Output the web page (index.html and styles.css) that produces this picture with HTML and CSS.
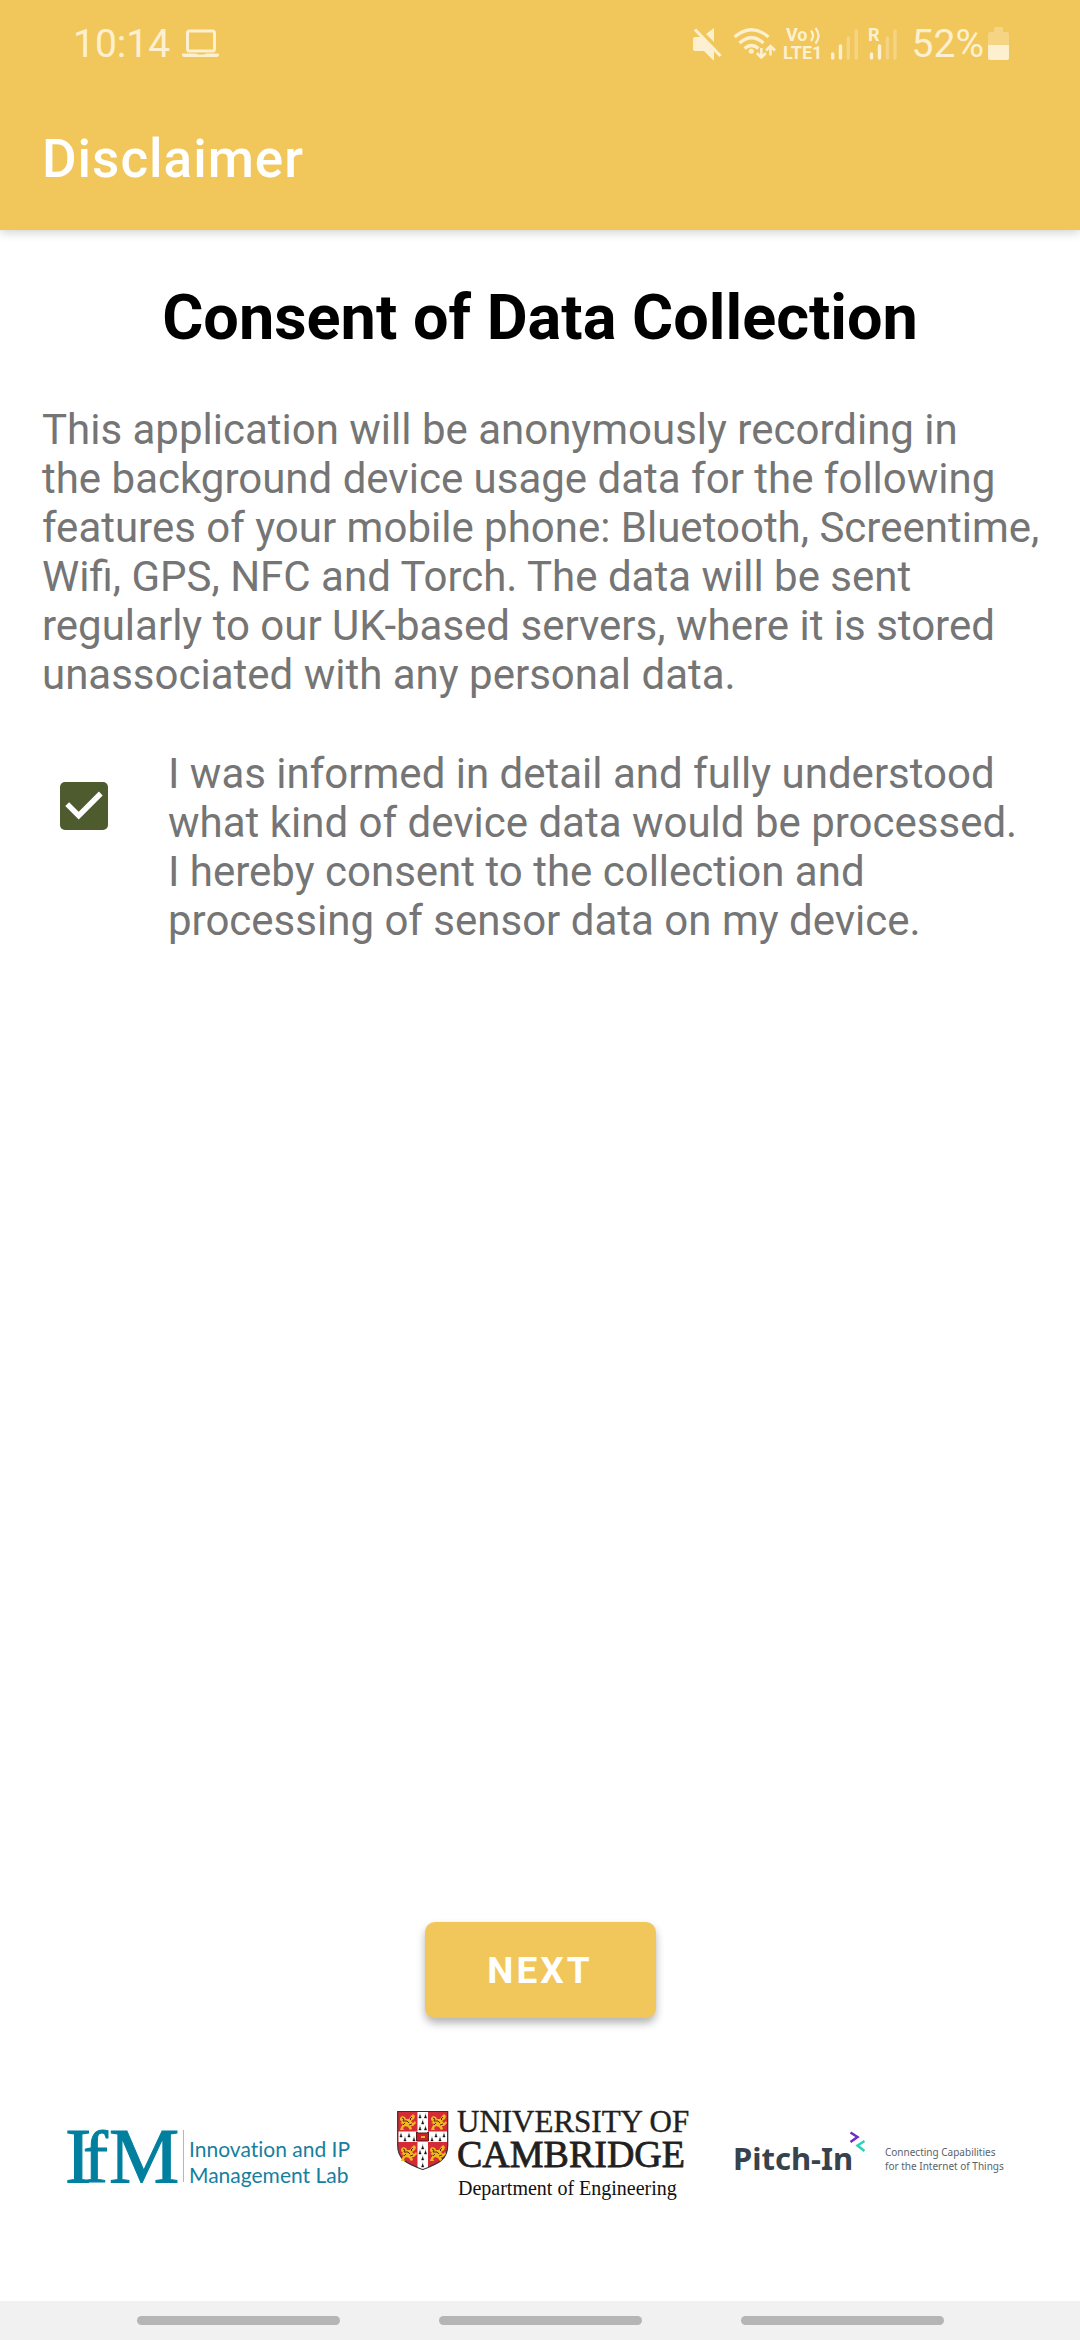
FILE: index.html
```html
<!DOCTYPE html>
<html lang="en">
<head>
<meta charset="utf-8">
<meta name="viewport" content="width=device-width">
<title>Disclaimer</title>
<link rel="stylesheet" href="styles.css">
</head>
<body>
<header class="top">
  <div class="status">
    <span class="clock">10:14</span>
    <svg class="laptop" width="38" height="30" viewBox="0 0 38 30" fill="none" stroke="currentColor"><rect x="5.5" y="2" width="27" height="20" rx="2" stroke-width="3"/><path d="M0 24.5h14l2 1h6l2-1h13v1q0 2.500-2.500 2.500h-32q-2.500 0-2.500-2.500z" fill="currentColor" stroke="none"/></svg>
    <div class="indicators">
      <svg width="204" height="56" viewBox="690 15 204 56" fill="currentColor">
        <path d="M692 38q0-2 2-2h6l13 13v10h-1l-9-9h-9q-2 0-2-2zM705 33l8-6v14z"/>
        <path d="M694 28.500L719.500 55" stroke="currentColor" stroke-width="3.200" fill="none"/>
        <g fill="none" stroke="currentColor" stroke-width="3.200">
          <path d="M733.500 36q17-14.500 34 0M738.500 42q12-10.500 24 0M743.500 47.500q7-6 14 0"/>
          <path d="M760.300 47v9M755.800 52l4.500 4.500 4.500-4.500M769.500 54.500v-9M765 49.500l4.500-4.500 4.500 4.500" stroke-width="2.600"/>
          <path d="M810 29.500q4 5 0 10.500M814.500 27q6 7.500 0 15.500" stroke-width="2.200"/>
        </g>
        <circle cx="750.300" cy="50.300" r="2.500"/>
        <text class="badge" x="785" y="40">Vo</text>
        <text class="badge" x="782" y="58">LTE1</text>
        <g stroke="currentColor" stroke-width="3.400" stroke-linecap="round">
          <path d="M831.700 53v4M839.500 45v12M870.500 53v4M878.500 45v12"/>
          <path d="M847.300 37v20M855.200 30v27M886.500 37v20M894 30v27" opacity=".35"/>
        </g>
        <text class="badge" x="867" y="40">R</text>
      </svg>
      <span class="percent">52%</span>
      <svg width="21" height="35" viewBox="0 0 21 35" fill="currentColor"><path d="M2 5h4V1q0-1 1-1h7q1 0 1 1v4h4q2 0 2 2v11H0V7q0-2 2-2z" opacity=".35"/><path d="M0 18h21v13q0 2-2 2H2q-2 0-2-2z"/></svg>
    </div>
  </div>
  <h1 class="app-title">Disclaimer</h1>
</header>

<main class="content">
  <h2 class="heading">Consent of Data Collection</h2>
  <p class="copy">This application will be anonymously recording in<br>the background device usage data for the following<br>features of your mobile phone: Bluetooth, Screentime,<br>Wifi, GPS, NFC and Torch. The data will be sent<br>regularly to our UK-based servers, where it is stored<br>unassociated with any personal data.</p>
  <div class="consent">
    <input class="tick" type="checkbox" id="consent" checked>
    <label class="copy" for="consent">I was informed in detail and fully understood<br>what kind of device data would be processed.<br>I hereby consent to the collection and<br>processing of sensor data on my device.</label>
  </div>
  <button class="next" type="button">NEXT</button>
</main>

<footer class="logos">
  <svg width="284" height="90" viewBox="66 2110 284 90" role="img" aria-label="IfM Innovation and IP Management Lab">
    <text class="ifm-mark" x="65 83 109" y="2182">I<tspan class="ifm-f">f</tspan>M</text>
    <path d="M183.500 2130v52" stroke="#8cc5d3" stroke-width="1"/>
    <text class="ifm-name" x="189" y="2157">Innovation and IP</text>
    <text class="ifm-name" x="189" y="2183">Management Lab</text>
  </svg>
  <svg width="291" height="90" viewBox="396 2110 291 90" role="img" aria-label="University of Cambridge Department of Engineering">
    <defs>
      <g id="lion">
        <path d="M1 4l2-2 3 1 1 2h3l2-3 2-2 2 2-1 3-3 2 2 2 2-2 1 2-3 3-2 0 1 3-2 1-2-3-3-1-2 2 1 2H1l1-3 2-3-3-1 2-1-2-2z" fill="#f0b81f"/>
        <path d="M3 4l2 1-1 2 4 0 2 2M13 3l-2 2 1 1M4 11l2-2M10 11l3-1" fill="none" stroke="#5e2415" stroke-width="1"/>
      </g>
      <g id="ermine"><path d="M0-2.500v2M-1.200 2L0-1l1.200 3L0 2z" fill="#111" stroke="#111" stroke-width=".4"/></g>
    </defs>
    <path d="M396.700 2111.500h50v34c0 14-9 18-25 24-16-6-25-10-25-24z" fill="#d52b37" stroke="#333" stroke-width="1.200"/>
    <path d="M416.500 2112h10.500v19.500h19v10.500h-19v25l-5.300 2-5.200-2V2142h-19v-10.500h19z" fill="#fff"/>
    <use href="#lion" x="398" y="2114"/><use href="#lion" x="429" y="2114"/>
    <use href="#lion" x="399" y="2145"/><use href="#lion" x="428" y="2145"/>
    <use href="#ermine" x="419" y="2116"/><use href="#ermine" x="424.500" y="2116"/><use href="#ermine" x="421.700" y="2122"/><use href="#ermine" x="419" y="2128"/><use href="#ermine" x="424.500" y="2128"/>
    <use href="#ermine" x="400" y="2135"/><use href="#ermine" x="404" y="2139"/><use href="#ermine" x="408" y="2135"/><use href="#ermine" x="413" y="2139"/>
    <use href="#ermine" x="431" y="2139"/><use href="#ermine" x="435" y="2135"/><use href="#ermine" x="439" y="2139"/><use href="#ermine" x="443" y="2135"/>
    <use href="#ermine" x="421.700" y="2147"/><use href="#ermine" x="419" y="2152"/><use href="#ermine" x="424.500" y="2152"/><use href="#ermine" x="421.700" y="2158"/><use href="#ermine" x="421.700" y="2165"/>
    <path d="M415.500 2132l2 1h8l2-1v9h-12z" fill="#c9202d" stroke="#5e1a1a"/><path d="M420 2136h4v2h-4z" fill="#f0b81f"/>
    <text class="cam-top" x="456" y="2132">UNIVERSITY OF</text>
    <text class="cam-name" x="456" y="2167">CAMBRIDGE</text>
    <text class="cam-dept" x="457" y="2195">Department of Engineering</text>
  </svg>
  <svg width="272" height="90" viewBox="734 2110 272 90" role="img" aria-label="Pitch-In Connecting Capabilities for the Internet of Things">
    <text class="pitch-mark" x="733" y="2170">Pitch-In</text>
    <path d="M850.500 2132.500l7 4.500-7 5" fill="none" stroke="#6d2fc0" stroke-width="2.500"/>
    <path d="M864.500 2141l-7 4.500 7 5.500" fill="none" stroke="#2bd3bd" stroke-width="2.500"/>
    <text class="pitch-tag" x="885" y="2156">Connecting Capabilities</text>
    <text class="pitch-tag" x="885" y="2170">for the Internet of Things</text>
  </svg>
</footer>
<nav class="nav" aria-label="System navigation">
  <button class="pill" type="button" aria-label="Recent apps"></button>
  <button class="pill" type="button" aria-label="Home"></button>
  <button class="pill" type="button" aria-label="Back"></button>
</nav>
</body>
</html>
```
FILE: styles.css
```css
* { box-sizing: border-box; }

body {
  margin: 0;
  min-height: 100vh;
  display: flex;
  flex-direction: column;
  background: #fff;
  font-family: Roboto, sans-serif;
}

h1, h2, p { margin: 0; }

svg { overflow: visible; }

.top {
  height: 230px;
  background: #f1c75b;
  color: #fff;
  box-shadow: 0 2px 10px rgba(0, 0, 0, .2);
}

.status {
  height: 88px;
  padding: 0 71px 0 73px;
  display: flex;
  align-items: center;
  color: #fdf0d0;
  font-size: 39px;
  line-height: 46px;
}

.laptop { margin-left: 12px; }

.indicators {
  margin-left: auto;
  display: flex;
  align-items: center;
}

.percent { margin: 0 4px 0 17px; }

.badge { font: 700 18px Roboto, sans-serif; }

.app-title {
  padding: 40px 42px 0;
  font-size: 53px;
  line-height: 62px;
  font-weight: 500;
  letter-spacing: 1px;
}

.content {
  flex: 1;
  display: flex;
  flex-direction: column;
  padding: 51px 36px 92px;
}

.heading {
  font-size: 63px;
  line-height: 74px;
  text-align: center;
  color: #000;
}

.copy {
  font-size: 42px;
  line-height: 49px;
  color: #757575;
}

p.copy {
  margin-top: 50px;
  padding-left: 6px;
}

.consent {
  display: flex;
  align-items: flex-start;
  gap: 60px;
  margin-top: 50px;
  padding-left: 24px;
}

.tick {
  appearance: none;
  flex: none;
  width: 48px;
  height: 48px;
  margin: 33px 0 0;
  border: 2px solid #4d5b2f;
  border-radius: 5px;
  background: #fff;
}

.tick:checked { border: 0; background: #4d5b2f; }

.tick:checked::before {
  content: "";
  display: block;
  height: 100%;
  background: #fff;
  clip-path: polygon(11% 50%, 19% 42%, 39% 62%, 81% 20%, 89% 28%, 39% 78%);
}

.next {
  margin: auto auto 0;
  padding: 2px 0 0;
  width: 231px;
  height: 96px;
  border: 0;
  border-radius: 10px;
  background: #f1c75b;
  color: #fff;
  box-shadow: 0 5px 8px rgba(0, 0, 0, .3);
  font: 700 37px/44px Roboto, sans-serif;
  letter-spacing: 3px;
}

.logos {
  display: flex;
  justify-content: space-between;
  padding: 0 74px 101px 66px;
}

.ifm-mark { font: 79px "Liberation Serif", serif; fill: #007f9f; stroke: #007f9f; }
.ifm-f { font-size: 75px; }
.ifm-name { font: 21px Lato, sans-serif; font-variant-ligatures: none; fill: #167f9f; }
.cam-top { font: 31px "Liberation Serif", serif; fill: #231f20; stroke: #231f20; stroke-width: .4; }
.cam-name { font: 38px "Liberation Serif", serif; fill: #231f20; stroke: #231f20; stroke-width: .8; }
.cam-dept { font: 20px "Liberation Serif", serif; fill: #111; }
.pitch-mark { font: 700 31px "Noto Sans", sans-serif; fill: #36424c; }
.pitch-tag { font: 10px "Noto Sans", sans-serif; fill: #59636c; }

.nav {
  height: 39px;
  display: flex;
  justify-content: center;
  align-items: center;
  gap: 99px;
  background: #f1f1f1;
}

.pill {
  width: 203px;
  height: 9px;
  padding: 0;
  border: 0;
  border-radius: 5px;
  background: #b5b5b5;
}
```
